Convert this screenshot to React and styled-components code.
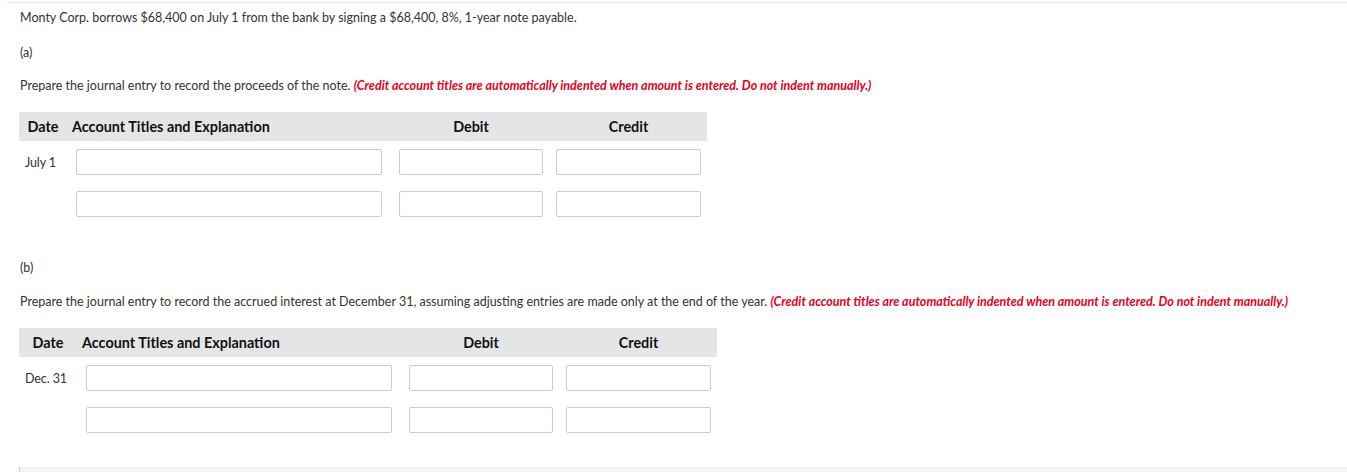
import React from 'react';
import styled, { createGlobalStyle } from 'styled-components';

const GlobalStyle = createGlobalStyle`
  body {
    margin: 0;
    background: #ffffff;
    font-family: 'Lato', 'Liberation Sans', sans-serif;
    color: #333333;
  }
`;

const Page = styled.main`
  margin: 2px 0 0 7px;
  padding: 6px 0 0 12px;
  border-top: 1px solid #e6e6e6;
`;

const Para = styled.p`
  margin: ${props => props.$top || 0}px 0 0 1px;
  font-size: 12.5px;
  line-height: 18px;
  color: #333333;
`;

const Note = styled.span`
  color: #e8001c;
  font-style: italic;
  font-weight: 700;
`;

const Journal = styled.div`
  margin-top: 17px;
  width: fit-content;
`;

const HeadRow = styled.div`
  display: grid;
  grid-template-columns: ${props => props.$date}px 323px 157px 145px;
  align-items: center;
  height: 29px;
  padding-right: 6px;
  background: #e5e5e5;
  font-size: 14.4px;
  font-weight: 700;
  color: #111111;
`;

const HeadDate = styled.div`
  text-align: center;
  padding-right: 9px;
`;

const HeadAccount = styled.div`
  margin-left: -4px;
`;

const HeadAmount = styled.div`
  width: ${props => props.$width}px;
  text-align: center;
`;

const Body = styled.div`
  display: flex;
  flex-direction: column;
  gap: 16px;
  padding-top: 8px;
`;

const EntryRow = styled.div`
  display: grid;
  grid-template-columns: ${props => props.$date}px 323px 157px 145px;
  align-items: center;
`;

const DateCell = styled.div`
  padding-left: 6px;
  font-size: 12.5px;
  letter-spacing: -0.1px;
  color: #333333;
`;

const Field = styled.input`
  box-sizing: border-box;
  width: ${props => props.$width}px;
  height: 26px;
  border: 1px solid #cccccc;
  border-radius: 2px;
  background: #ffffff;
  padding: 0 6px;
  font-family: inherit;
  font-size: 12px;
`;

const FooterBar = styled.div`
  margin-top: 34px;
  height: 20px;
  background: #f3f3f3;
  border-left: 1px solid #cccccc;
`;

function JournalTable({ date, dateWidth }) {
  return (
    <Journal>
      <HeadRow $date={dateWidth}>
        <HeadDate>Date</HeadDate>
        <HeadAccount>Account Titles and Explanation</HeadAccount>
        <HeadAmount $width={144}>Debit</HeadAmount>
        <HeadAmount $width={145}>Credit</HeadAmount>
      </HeadRow>
      <Body>
        {[date, ''].map((d, i) => (
          <EntryRow key={i} $date={dateWidth}>
            <DateCell>{d}</DateCell>
            <Field type="text" $width={306} />
            <Field type="text" $width={144} />
            <Field type="text" $width={145} />
          </EntryRow>
        ))}
      </Body>
    </Journal>
  );
}

export default function App() {
  return (
    <>
      <GlobalStyle />
      <Page>
        <Para>
          Monty Corp. borrows $68,400 on July 1 from the bank by signing a $68,400, 8%, 1-year note payable.
        </Para>
        <Para $top={17}>(a)</Para>
        <Para $top={15}>
          Prepare the journal entry to record the proceeds of the note.{' '}
          <Note>(Credit account titles are automatically indented when amount is entered. Do not indent manually.)</Note>
        </Para>
        <JournalTable date="July 1" dateWidth={57} />

        <Para $top={42}>(b)</Para>
        <Para $top={16}>
          Prepare the journal entry to record the accrued interest at December 31, assuming adjusting entries are made only at the end of the year.{' '}
          <Note>(Credit account titles are automatically indented when amount is entered. Do not indent manually.)</Note>
        </Para>
        <JournalTable date="Dec. 31" dateWidth={67} />

        <FooterBar />
      </Page>
    </>
  );
}
